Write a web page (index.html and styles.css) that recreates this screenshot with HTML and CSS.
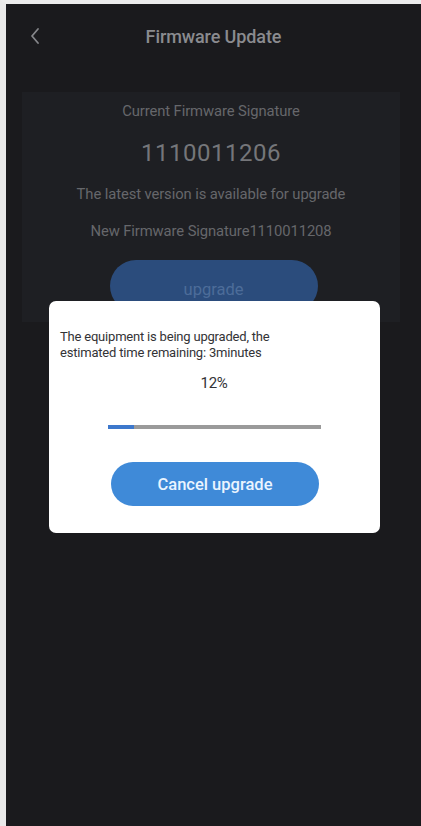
FILE: index.html
```html
<!DOCTYPE html>
<html>
<head>
<meta charset="utf-8">
<link rel="stylesheet" href="styles.css">
</head>
<body>
<div class="screen">
  <header class="header">
    <svg class="back" width="14" height="20" viewBox="0 0 14 20"><path d="M10 3 L4 10 L10 17" fill="none" stroke="#85868a" stroke-width="1.8" stroke-linecap="round" stroke-linejoin="round"/></svg>
    <div class="title">Firmware Update</div>
  </header>
  <section class="card">
    <div class="label">Current Firmware Signature</div>
    <div class="version">1110011206</div>
    <div class="label avail">The latest version is available for upgrade</div>
    <div class="label newsig">New Firmware Signature1110011208</div>
    <div class="upgrade-btn">upgrade</div>
  </section>
  <div class="dialog">
    <div class="msg">The equipment is being upgraded, the estimated time remaining: 3minutes</div>
    <div class="pct">12%</div>
    <div class="bar"><div class="fill" style="width:12%"></div></div>
    <div class="cancel">Cancel upgrade</div>
  </div>
</div>
</body>
</html>
```

FILE: styles.css
```css
html, body {
  margin: 0;
  padding: 0;
  background: #1a1a1d;
}
.screen {
  position: relative;
  box-sizing: border-box;
  width: 421px;
  height: 826px;
  border-left: 6px solid #e9e9e9;
  border-top: 4px solid #ececec;
  background: #1a1a1d;
  font-family: Roboto, "Liberation Sans", sans-serif;
  overflow: hidden;
}
.header {
  position: relative;
  height: 64px;
  display: flex;
  align-items: center;
  justify-content: center;
}
.back {
  position: absolute;
  left: 22px;
  top: 22px;
}
.title {
  color: #8a8b8f;
  font-size: 18px;
  font-weight: 500;
  margin-left: 0;
  letter-spacing: -0.1px;
}
.card {
  margin: 24px 21px 0 16px;
  height: 230px;
  background: #1e1f23;
  display: flex;
  flex-direction: column;
  align-items: center;
  padding-top: 9px;
  box-sizing: border-box;
}
.label {
  color: #66676b;
  font-size: 14.8px;
  line-height: 20px;
  letter-spacing: -0.1px;
}
.version {
  color: #75767a;
  font-size: 24px;
  line-height: 30px;
  margin-top: 17px;
  letter-spacing: 0.5px;
}
.avail {
  margin-top: 16px;
}
.newsig {
  margin-top: 17px;
}
.upgrade-btn {
  margin-top: 19px;
  margin-left: 5px;
  width: 208px;
  height: 52px;
  border-radius: 26px;
  background: #2b4c7c;
  color: #4d6c99;
  font-size: 16.5px;
  display: flex;
  align-items: center;
  justify-content: center;
  padding-top: 6px;
  box-sizing: border-box;
}
.dialog {
  position: absolute;
  left: 43px;
  top: 297px;
  width: 331px;
  height: 232px;
  box-sizing: border-box;
  background: #ffffff;
  border-radius: 7px;
  padding: 28px 11px 0 11px;
  display: flex;
  flex-direction: column;
  align-items: center;
}
.msg {
  align-self: flex-start;
  width: 240px;
  color: #333336;
  font-size: 13px;
  line-height: 16px;
  letter-spacing: -0.2px;
}
.pct {
  margin-top: 14px;
  color: #333336;
  font-size: 15px;
  line-height: 16px;
  margin-left: -1px;
  letter-spacing: -0.3px;
}
.bar {
  margin-top: 34px;
  width: 213px;
  height: 4px;
  background: #9a9a9a;
}
.fill {
  height: 100%;
  background: #3d78cc;
}
.cancel {
  margin-top: 33px;
  width: 208px;
  height: 44px;
  border-radius: 22px;
  background: #3f8ad8;
  color: #eaf4ff;
  font-size: 16.5px;
  font-weight: 500;
  display: flex;
  align-items: center;
  justify-content: center;
  margin-left: 1px;
}
```
